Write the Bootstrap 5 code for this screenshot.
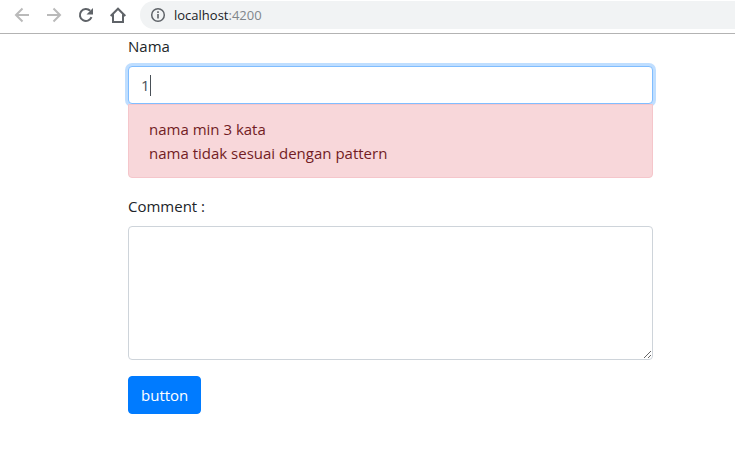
<!DOCTYPE html>
<html lang="id">
<head>
<meta charset="utf-8">
<meta name="viewport" content="width=device-width, initial-scale=1">
<title>localhost:4200</title>
<link href="https://cdn.jsdelivr.net/npm/bootstrap@5.3.0/dist/css/bootstrap.min.css" rel="stylesheet">
<style>
  body { font-family: "Open Sans", "Noto Sans", sans-serif; font-size: 15px; line-height: 24px; color: #212529; background: #fff; }
  .browser-bar { height: 34px; padding: 1px 0 4px 14px; border-bottom: 1px solid #b3b3b3; gap: 16px; }
  .tool { width: 16px; height: 16px; color: #5f6368; }
  .tool:disabled { color: #bababa; }
  .tool svg, .address svg { display: block; }
  .address { height: 28px; margin-left: -2px; padding-left: 10px; gap: 8px; background: #f1f3f4; border-radius: 14px 0 0 14px; color: #5f6368; }
  .url { font-size: 13px; line-height: 20px; color: #80868b; }
  .url span { color: #202124; }
  .page { padding: 0 82px 24px 128px; }
  .form-control { font-size: 15px; line-height: 24px; padding: 6px 12px; border-color: #ced4da; border-radius: 4px; color: #495057; }
  .name-field, .name-field:focus {
    border-color: #80bdff; box-shadow: 0 0 0 3px rgba(0, 123, 255, .25); color: #495057;
    background: linear-gradient(#495057, #495057) 21px 8px / 1px 21px no-repeat #fff;
    caret-color: transparent;
  }
  .alert-danger { padding: 12px 20px; border-radius: 0 0 4px 4px; background: #f8d7da; border-color: #f5c6cb; color: #721c24; }
  .btn-primary { --bs-btn-bg: #007bff; --bs-btn-border-color: #007bff; font-size: 15px; line-height: 24px; padding: 6px 12px; border-radius: 4px; }
</style>
<script src="https://cdn.jsdelivr.net/npm/bootstrap@5.3.0/dist/js/bootstrap.bundle.min.js" defer></script>
</head>
<body>
<header class="browser-bar d-flex align-items-center">
  <button class="tool border-0 bg-transparent p-0" type="button" aria-label="Back" disabled>
    <svg width="16" height="16" viewBox="0 0 16 16" fill="none" stroke="currentColor" stroke-width="2"><path d="M15 8H2M8.5 1.5 2 8l6.500 6.500"/></svg>
  </button>
  <button class="tool border-0 bg-transparent p-0" type="button" aria-label="Forward" disabled>
    <svg width="16" height="16" viewBox="0 0 16 16" fill="none" stroke="currentColor" stroke-width="2"><path d="M1 8h13M7.500 1.500 14 8l-6.500 6.500"/></svg>
  </button>
  <button class="tool border-0 bg-transparent p-0" type="button" aria-label="Reload">
    <svg width="16" height="16" viewBox="0 0 16 16"><path d="M13.500 10.200A6 6 0 1 1 12.200 3.800" fill="none" stroke="currentColor" stroke-width="2"/><path d="M15 1v6.500H8.500z" fill="currentColor"/></svg>
  </button>
  <button class="tool border-0 bg-transparent p-0" type="button" aria-label="Home">
    <svg width="16" height="16" viewBox="0 0 16 16" fill="none" stroke="currentColor" stroke-width="2"><path d="M3 7.500V15h10V7.500M.7 9 8 1.700 15.300 9"/></svg>
  </button>
  <div class="address flex-grow-1 d-flex align-items-center">
    <svg width="16" height="16" viewBox="0 0 16 16"><circle cx="8" cy="8" r="6.300" fill="none" stroke="currentColor" stroke-width="1.500"/><path d="M7.200 7h1.600v4.500H7.200zM7.200 4.300h1.600v1.600H7.200z" fill="currentColor"/></svg>
    <div class="url"><span>localhost</span>:4200</div>
  </div>
</header>
<main class="page">
  <form>
    <div class="mb-3">
      <label class="d-block mb-2" for="nama">Nama</label>
      <input class="form-control name-field" id="nama" type="text" value="1" autocomplete="off" aria-describedby="nama-errors">
      <div class="alert alert-danger mb-0" id="nama-errors" role="alert">
        <div>nama min 3 kata</div>
        <div>nama tidak sesuai dengan pattern</div>
      </div>
    </div>
    <div class="mb-3">
      <label class="d-block mb-2" for="comment">Comment :</label>
      <textarea class="form-control" id="comment" rows="5"></textarea>
    </div>
    <button class="btn btn-primary" type="button">button</button>
  </form>
</main>
</body>
</html>
